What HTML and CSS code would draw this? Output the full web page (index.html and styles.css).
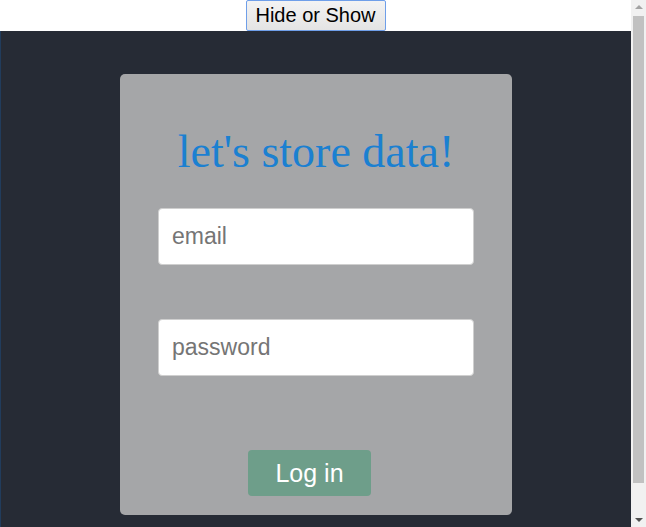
FILE: index.html
```html
<!DOCTYPE html>
<html>
<head>
<meta charset="utf-8">
<link rel="stylesheet" href="styles.css">
</head>
<body>
<div class="top">
  <button class="toggle">Hide or Show</button>
</div>
<main class="stage">
  <form class="card">
    <h1 class="title">let's store data!</h1>
    <input class="field" type="text" placeholder="email">
    <input class="field" type="password" placeholder="password">
    <button class="login" type="button">Log in</button>
  </form>
</main>
<div class="scrollbar" aria-hidden="true">
  <span class="arrow up"></span>
  <span class="thumb"></span>
  <span class="arrow down"></span>
</div>
</body>
</html>
```

FILE: styles.css
```css
html, body {
  margin: 0;
  padding: 0;
}
body {
  font-family: "Liberation Sans", Arial, sans-serif;
  background: #262b35;
  padding-right: 15px;
}
.top {
  background: #ffffff;
  height: 31px;
  display: flex;
  justify-content: center;
}
.toggle {
  font-family: "Liberation Sans", Arial, sans-serif;
  font-size: 20px;
  height: 31px;
  width: 140px;
  padding: 0;
  color: #000;
  background: linear-gradient(#f3f3f3, #e4e4e4);
  border: 1px solid #6f9fe9;
  border-radius: 2px;
}
.stage {
  background: #262b35;
  padding: 43px 0 45px;
  border-left: 1px solid #213c5c;
}
.card {
  width: 392px;
  height: 441px;
  margin: 0 auto;
  box-sizing: border-box;
  background: #a5a6a8;
  border-radius: 5px;
  display: flex;
  flex-direction: column;
  align-items: center;
  padding-top: 50px;
}
.title {
  margin: 0;
  font-family: "Liberation Serif", "Times New Roman", serif;
  font-weight: normal;
  font-size: 46px;
  line-height: 56px;
  color: #1b80d1;
}
.field {
  box-sizing: border-box;
  width: 316px;
  height: 57px;
  margin-top: 28px;
  border: 1px solid #cfcfcf;
  border-radius: 4px;
  background: #fff;
  padding: 0 13px;
  font-family: "Liberation Sans", Arial, sans-serif;
  font-size: 23px;
  color: #333;
}
.field + .field {
  margin-top: 54px;
}
.field::placeholder {
  color: #757575;
}
.login {
  margin-top: 74px;
  margin-right: 13px;
  width: 123px;
  height: 46px;
  padding: 0;
  border: none;
  border-radius: 4px;
  background: #6e9e8a;
  color: #ffffff;
  font-family: "Liberation Sans", Arial, sans-serif;
  font-size: 25px;
}
.scrollbar {
  position: fixed;
  top: 0;
  right: 0;
  width: 15px;
  height: 100vh;
  background: #f1f1f1;
  display: flex;
  flex-direction: column;
  align-items: center;
}
.arrow {
  width: 0;
  height: 0;
  border-left: 4px solid transparent;
  border-right: 4px solid transparent;
  margin: 5px 0 6px;
}
.arrow.up {
  border-bottom: 4px solid #a3a3a3;
}
.arrow.down {
  border-top: 4px solid #505050;
  margin-top: auto;
  margin-bottom: 5px;
}
.thumb {
  width: 11px;
  height: 467px;
  margin-top: 1px;
  background: #c1c1c1;
}
```
